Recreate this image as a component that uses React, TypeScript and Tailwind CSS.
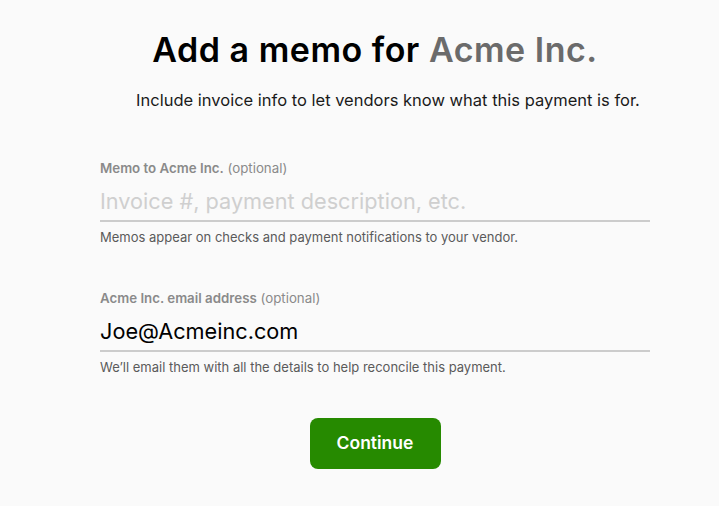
import React, { useState } from 'react'

const font = { fontFamily: 'Inter, "Liberation Sans", sans-serif' }

export default function App() {
    const [memo, setMemo] = useState('')
    const [email, setEmail] = useState('Joe@Acmeinc.com')

    return (
        <div className="min-h-[506px] w-full bg-[#fafafa] text-black" style={font}>
            <div className="ml-[100px] flex w-[550px] flex-col pt-[35px]">
                <h1 className="text-center text-[34px] font-semibold leading-[30px] tracking-[0.5px]">
                    Add a memo for <span className="text-[#6b6b6b]">Acme Inc.</span>
                </h1>
                <p className="mt-[25px] pl-[26px] text-center text-[16.5px] leading-[20px] text-[#1a1a1a] whitespace-nowrap">
                    Include invoice info to let vendors know what this payment is for.
                </p>

                <Field
                    className="mt-[50px]"
                    label="Memo to Acme Inc."
                    placeholder="Invoice #, payment description, etc."
                    value={memo}
                    onChange={setMemo}
                    hint="Memos appear on checks and payment notifications to your vendor."
                />
                <Field
                    className="mt-[45px]"
                    label="Acme Inc. email address"
                    placeholder="vendor@email.com"
                    value={email}
                    onChange={setEmail}
                    hint="We’ll email them with all the details to help reconcile this payment."
                />

                <div className="mt-[43px] flex justify-center">
                    <button className="h-[51px] w-[131px] rounded-[8px] bg-[#268a00] text-[17.5px] font-semibold text-white">
                        Continue
                    </button>
                </div>
            </div>
        </div>
    )
}

const Field = ({ label, placeholder, value, onChange, hint, className }: {
    label: string, placeholder: string, value: string, onChange: (v: string) => void, hint: string, className?: string
}) => {
    return (
        <div className={`flex flex-col ${className ?? ''}`}>
            <label className="text-[13.3px] leading-[16px] text-[#8a8a8a]">
                <span className="font-semibold">{label}</span> <span>(optional)</span>
            </label>
            <input
                className="mt-[10px] h-[36px] border-b-2 border-[#cccccc] bg-transparent pb-[4px] text-[21.7px] text-black outline-none placeholder:text-[#cfcfcf]"
                style={font}
                placeholder={placeholder}
                value={value}
                onChange={(e) => onChange(e.target.value)}
            />
            <p className="mt-[7px] text-[13px] leading-[16px] text-[#5a5a5a]">{hint}</p>
        </div>
    )
}
